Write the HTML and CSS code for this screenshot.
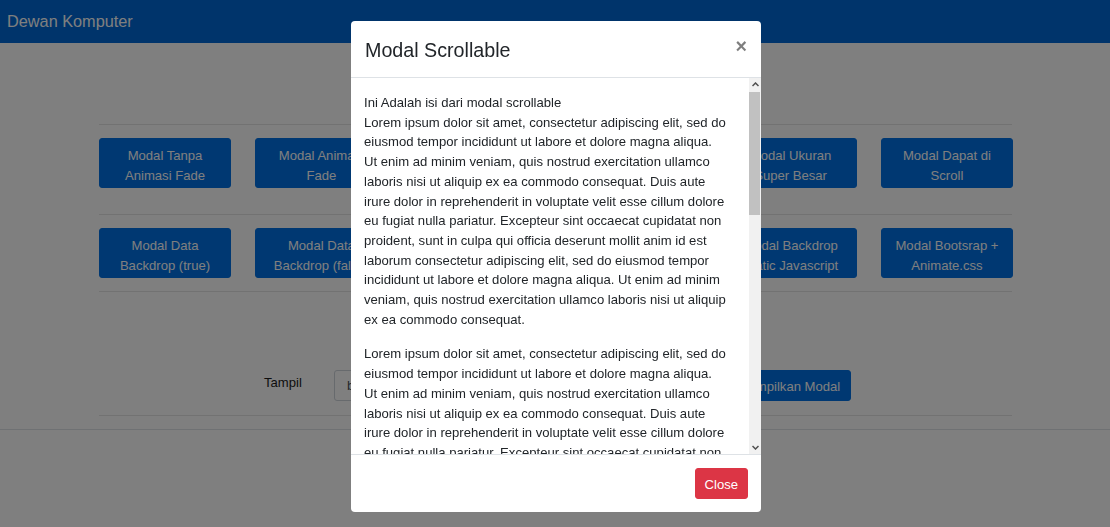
FILE: index.html
```html
<!DOCTYPE html>
<html lang="id">
<head>
<meta charset="utf-8">
<title>Dewan Komputer - Modal Scrollable</title>
<link rel="stylesheet" href="styles.css">
</head>
<body>
<nav class="navbar">
  <a class="brand" href="#">Dewan Komputer</a>
</nav>

<main class="container">
  <h4 class="page-title">Kumpulan Contoh Modal Bootstrap</h4>
  <hr class="rule">
  <div class="btn-grid first">
    <button class="btn btn-primary">Modal Tanpa Animasi Fade</button>
    <button class="btn btn-primary">Modal Animasi Fade</button>
    <button class="btn btn-primary">Modal Ukuran Kecil</button>
    <button class="btn btn-primary">Modal Ukuran Besar</button>
    <button class="btn btn-primary">Modal Ukuran Super Besar</button>
    <button class="btn btn-primary">Modal Dapat di Scroll</button>
  </div>
  <hr class="rule">
  <div class="btn-grid">
    <button class="btn btn-primary">Modal Data Backdrop (true)</button>
    <button class="btn btn-primary">Modal Data Backdrop (false)</button>
    <button class="btn btn-primary">Modal Data Backdrop (static)</button>
    <button class="btn btn-primary">Modal Data Keyboard (false)</button>
    <button class="btn btn-primary">Modal Backdrop Static Javascript</button>
    <button class="btn btn-primary">Modal Bootsrap + Animate.css</button>
  </div>
  <hr class="rule">
  <h5 class="sub-title">Modal Dinamis</h5>
  <div class="form-row">
    <label class="label" for="jenis">Tampil</label>
    <select class="select" id="jenis">
      <option>biasa</option>
    </select>
    <button class="btn btn-primary btn-single">Tampilkan Modal</button>
  </div>
  <hr class="rule last">
</main>
<footer class="footer"></footer>

<div class="backdrop"></div>

<div class="modal">
  <div class="modal-header">
    <h4 class="modal-title">Modal Scrollable</h4>
    <button class="close" type="button">&times;</button>
  </div>
  <div class="modal-body">
    <div class="modal-text">
      <p>Ini Adalah isi dari modal scrollable<br>
      Lorem ipsum dolor sit amet, consectetur adipiscing elit, sed do<br>
      eiusmod tempor incididunt ut labore et dolore magna aliqua.<br>
      Ut enim ad minim veniam, quis nostrud exercitation ullamco<br>
      laboris nisi ut aliquip ex ea commodo consequat. Duis aute<br>
      irure dolor in reprehenderit in voluptate velit esse cillum dolore<br>
      eu fugiat nulla pariatur. Excepteur sint occaecat cupidatat non<br>
      proident, sunt in culpa qui officia deserunt mollit anim id est<br>
      laborum consectetur adipiscing elit, sed do eiusmod tempor<br>
      incididunt ut labore et dolore magna aliqua. Ut enim ad minim<br>
      veniam, quis nostrud exercitation ullamco laboris nisi ut aliquip<br>
      ex ea commodo consequat.</p>
      <p>Lorem ipsum dolor sit amet, consectetur adipiscing elit, sed do<br>
      eiusmod tempor incididunt ut labore et dolore magna aliqua.<br>
      Ut enim ad minim veniam, quis nostrud exercitation ullamco<br>
      laboris nisi ut aliquip ex ea commodo consequat. Duis aute<br>
      irure dolor in reprehenderit in voluptate velit esse cillum dolore<br>
      eu fugiat nulla pariatur. Excepteur sint occaecat cupidatat non<br>
      proident, sunt in culpa qui officia deserunt mollit anim id est<br>
      laborum.</p>
    </div>
    <div class="scrollbar">
      <div class="sb-btn">
        <svg width="7" height="5" viewBox="0 0 7 5"><path d="M0.5 4 L3.5 1 L6.5 4" fill="none" stroke="#505050" stroke-width="1.5"/></svg>
      </div>
      <div class="sb-track"><div class="sb-thumb"></div></div>
      <div class="sb-btn">
        <svg width="7" height="5" viewBox="0 0 7 5"><path d="M0.5 1 L3.5 4 L6.5 1" fill="none" stroke="#505050" stroke-width="1.5"/></svg>
      </div>
    </div>
  </div>
  <div class="modal-footer">
    <button class="btn btn-danger" type="button">Close</button>
  </div>
</div>
</body>
</html>
```

FILE: styles.css
```css
* { box-sizing: border-box; }

html, body {
  margin: 0;
  padding: 0;
  height: 100%;
}

body {
  font-family: "Liberation Sans", Arial, sans-serif;
  font-size: 13.1px;
  line-height: 1.5;
  color: #212529;
  background: #ffffff;
  overflow: hidden;
}

.navbar {
  height: 43px;
  background: #0068d6;
  display: flex;
  align-items: center;
  padding: 0 7px;
}

.brand {
  color: #ffffff;
  font-size: 16.3px;
  text-decoration: none;
  line-height: 1;
  margin-top: -1px;
}

.container {
  width: 914px;
  margin: 0 auto;
  padding-left: 1px;
}

.page-title {
  margin: 0;
  height: 81px;
  padding-top: 30px;
  text-align: center;
  font-size: 19.7px;
  font-weight: normal;
  line-height: 1.2;
}

.rule {
  margin: 0;
  border: 0;
  border-top: 1px solid rgba(0, 0, 0, 0.1);
}

.btn-grid {
  display: grid;
  grid-template-columns: repeat(6, 132px);
  column-gap: 24.4px;
  padding: 13px 0 13px;
}

.btn-grid.first {
  padding-bottom: 26px;
}

.btn {
  font-family: inherit;
  font-size: 13.1px;
  line-height: 19.7px;
  border: 1px solid transparent;
  border-radius: 3px;
  padding: 4.3px 10px;
  color: #ffffff;
  text-align: center;
  cursor: pointer;
}

.btn-primary {
  background: #0070e4;
  border-color: #0070e4;
}

.btn-grid .btn {
  height: 50px;
  padding: 7px 12px 1px;
}

.btn-danger {
  background: #dc3545;
  border-color: #dc3545;
  height: 31px;
  padding: 5px 9px 3px;
}

.sub-title {
  margin: 0;
  height: 78px;
  padding-top: 28px;
  text-align: center;
  font-size: 16.4px;
  font-weight: normal;
  line-height: 1.2;
}

.form-row {
  display: flex;
  align-items: center;
  padding-left: 165px;
  height: 45px;
  padding-bottom: 14px;
  margin-top: 0;
}

.label {
  width: 37px;
  margin-right: 33px;
  color: #1a1a1a;
  margin-top: -6px;
}

.select {
  width: 385px;
  height: 31px;
  font-family: inherit;
  font-size: 13.1px;
  color: #495057;
  background: #ffffff;
  border: 1px solid #ced4da;
  border-radius: 3px;
  padding: 0 12px;
  appearance: none;
  -webkit-appearance: none;
  margin-right: 12px;
}

.btn-single {
  height: 31px;
  padding: 5px 10px 3px;
}

.rule.last {
  margin-bottom: 13px;
}

.footer {
  border-top: 1px solid #dee2e6;
  height: 100px;
}

.backdrop {
  position: fixed;
  inset: 0;
  background: rgba(0, 0, 0, 0.5);
}

.modal {
  position: fixed;
  top: 21px;
  left: 351px;
  width: 410px;
  height: 491px;
  background: #ffffff;
  border-radius: 4px;
  display: flex;
  flex-direction: column;
  overflow: hidden;
}

.modal-header {
  height: 57px;
  flex: none;
  display: flex;
  align-items: center;
  justify-content: space-between;
  padding: 4px 13px 0 14px;
  border-bottom: 1px solid #dee2e6;
}

.modal-title {
  margin: 0;
  font-size: 19.7px;
  font-weight: normal;
  line-height: 1.5;
  color: #212529;
}

.close {
  background: none;
  border: 0;
  padding: 0;
  margin-right: 1px;
  font-family: inherit;
  font-size: 19.7px;
  font-weight: bold;
  line-height: 1;
  color: #000000;
  opacity: 0.5;
  margin-top: -8px;
}

.modal-body {
  flex: 1;
  display: flex;
  min-height: 0;
  overflow: hidden;
}

.modal-text {
  flex: 1;
  padding: 15px 0 0 13px;
  overflow: hidden;
}

.modal-text p {
  margin: 0 0 15px;
  white-space: nowrap;
  line-height: 19.7px;
}

.scrollbar {
  width: 12px;
  flex: none;
  display: flex;
  flex-direction: column;
  background: #f1f1f1;
}

.sb-btn {
  height: 13px;
  display: flex;
  align-items: center;
  justify-content: center;
  flex: none;
}

.sb-track {
  flex: 1;
  padding: 1px 0 0 0;
}

.sb-thumb {
  height: 123px;
  background: #c1c1c1;
  margin: 0 1px 0 0;
}

.modal-footer {
  height: 58px;
  flex: none;
  display: flex;
  align-items: center;
  justify-content: flex-end;
  padding: 0 13px;
  border-top: 1px solid #dee2e6;
}
```
